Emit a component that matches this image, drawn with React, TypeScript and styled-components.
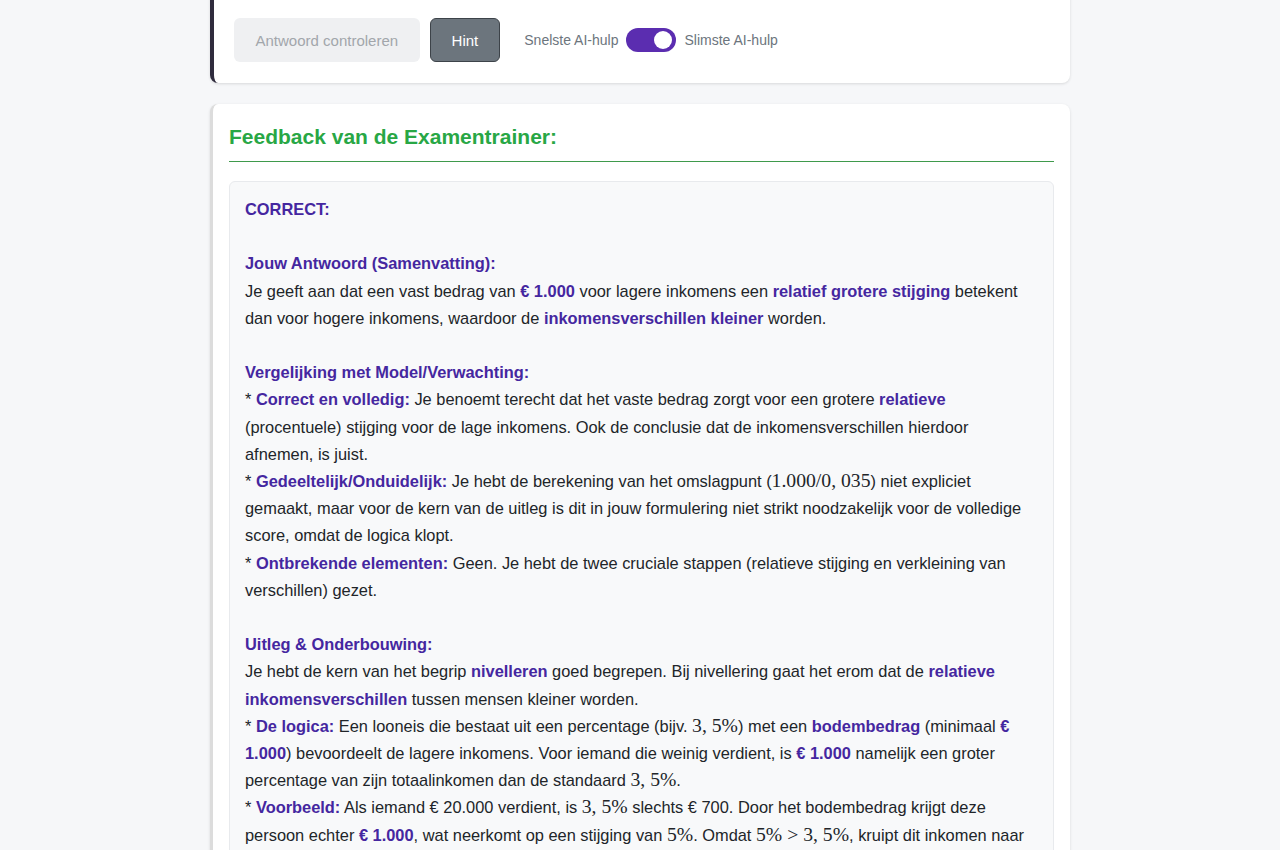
import styled, { createGlobalStyle } from 'styled-components';

const GlobalStyle = createGlobalStyle`
	html, body {
		margin: 0;
		padding: 0;
		background: #f6f7f9;
		font-family: "Liberation Sans", Arial, sans-serif;
		color: #212529;
		overflow: hidden;
	}
`;

const Page = styled.div`
	width: 860px;
	margin: -12px auto 0;
	display: flex;
	flex-direction: column;
	gap: 21px;
`;

const ControlsCard = styled.div`
	background: #fff;
	border-left: 4px solid #2f2b3d;
	border-radius: 8px;
	box-shadow: 0 1px 3px rgba(0, 0, 0, 0.12);
	padding: 30px 20px 21px;
	display: flex;
	align-items: center;
	gap: 10px;
`;

const Button = styled.button<{ $variant: 'disabled' | 'secondary' }>`
	height: 44px;
	padding: 0 ${(p) => (p.$variant === 'secondary' ? '21px' : '20.5px')};
	font-family: inherit;
	font-size: 15px;
	border-radius: 6px;
	cursor: pointer;
	border: 1px solid ${(p) => (p.$variant === 'secondary' ? '#3d4349' : 'transparent')};
	background: ${(p) => (p.$variant === 'secondary' ? '#6c757d' : '#eff0f2')};
	color: ${(p) => (p.$variant === 'secondary' ? '#fff' : '#a2a6ab')};
`;

const ToggleGroup = styled.div`
	display: flex;
	align-items: center;
	gap: 8px;
	margin-left: 14px;
	font-size: 14px;
	color: #6c757d;
`;

const Track = styled.span`
	width: 50px;
	height: 24px;
	border-radius: 12px;
	background: #5b2db0;
	display: flex;
	align-items: center;
	justify-content: flex-end;
	padding: 0 4px;
	box-sizing: border-box;
`;

const Knob = styled.span`
	width: 18px;
	height: 18px;
	border-radius: 50%;
	background: #fff;
`;

const FeedbackCard = styled.div`
	background: #fff;
	border-left: 3px solid #dcdcdc;
	border-radius: 8px;
	box-shadow: 0 1px 3px rgba(0, 0, 0, 0.12);
	padding: 20px 16px 20px 16px;
`;

const Heading = styled.h2`
	margin: 0 0 19px;
	padding: 0 0 11px;
	font-size: 21px;
	font-weight: 700;
	line-height: 26px;
	color: #28a745;
	border-bottom: 1px solid #3f9a4c;
`;

const FeedbackBox = styled.div`
	background: #f8f9fa;
	border: 1px solid #e8eaed;
	border-radius: 6px;
	padding: 14px 15px;
	font-size: 16.4px;
	line-height: 27.2px;
`;

const Section = styled.div`
	margin-bottom: 27.2px;
`;

const B = styled.strong`
	color: #4527a0;
	font-weight: 700;
`;

const M = styled.span`
	font-family: "Liberation Serif", "DejaVu Serif", serif;
	font-size: 1.2em;
	line-height: 1;
`;

const Line = styled.div``;

export default function App() {
	return (
		<>
			<GlobalStyle />
			<Page>
				<ControlsCard>
					<Button $variant="disabled">Antwoord controleren</Button>
					<Button $variant="secondary">Hint</Button>
					<ToggleGroup>
						<span>Snelste AI-hulp</span>
						<Track>
							<Knob />
						</Track>
						<span>Slimste AI-hulp</span>
					</ToggleGroup>
				</ControlsCard>

				<FeedbackCard>
					<Heading>Feedback van de Examentrainer:</Heading>
					<FeedbackBox>
						<Section>
							<B>CORRECT:</B>
						</Section>

						<Section>
							<Line>
								<B>Jouw Antwoord (Samenvatting):</B>
							</Line>
							<Line>
								Je geeft aan dat een vast bedrag van <B>€ 1.000</B> voor lagere inkomens een{' '}
								<B>relatief grotere stijging</B> betekent dan voor hogere inkomens, waardoor de{' '}
								<B>inkomensverschillen kleiner</B> worden.
							</Line>
						</Section>

						<Section>
							<Line>
								<B>Vergelijking met Model/Verwachting:</B>
							</Line>
							<Line>
								* <B>Correct en volledig:</B> Je benoemt terecht dat het vaste bedrag zorgt voor een grotere{' '}
								<B>relatieve</B> (procentuele) stijging voor de lage inkomens. Ook de conclusie dat de
								inkomensverschillen hierdoor afnemen, is juist.
							</Line>
							<Line>
								* <B>Gedeeltelijk/Onduidelijk:</B> Je hebt de berekening van het omslagpunt (
								<M>1.000/0, 035</M>) niet expliciet gemaakt, maar voor de kern van de uitleg is dit in jouw
								formulering niet strikt noodzakelijk voor de volledige score, omdat de logica klopt.
							</Line>
							<Line>
								* <B>Ontbrekende elementen:</B> Geen. Je hebt de twee cruciale stappen (relatieve stijging en
								verkleining van verschillen) gezet.
							</Line>
						</Section>

						<Section>
							<Line>
								<B>Uitleg &amp; Onderbouwing:</B>
							</Line>
							<Line>
								Je hebt de kern van het begrip <B>nivelleren</B> goed begrepen. Bij nivellering gaat het erom
								dat de <B>relatieve inkomensverschillen</B> tussen mensen kleiner worden.
							</Line>
							<Line>
								* <B>De logica:</B> Een looneis die bestaat uit een percentage (bijv. <M>3, 5%</M>) met een{' '}
								<B>bodembedrag</B> (minimaal <B>€ 1.000</B>) bevoordeelt de lagere inkomens. Voor iemand die
								weinig verdient, is <B>€ 1.000</B> namelijk een groter percentage van zijn totaalinkomen dan de
								standaard <M>3, 5%</M>.
							</Line>
							<Line>
								* <B>Voorbeeld:</B> Als iemand € 20.000 verdient, is <M>3, 5%</M> slechts € 700. Door het
								bodembedrag krijgt deze persoon echter <B>€ 1.000</B>, wat neerkomt op een stijging van{' '}
								<M>5%</M>. Omdat <M>5% &gt; 3, 5%</M>, kruipt dit inkomen naar de hogere inkomens toe.
							</Line>
						</Section>
					</FeedbackBox>
				</FeedbackCard>
			</Page>
		</>
	);
}
